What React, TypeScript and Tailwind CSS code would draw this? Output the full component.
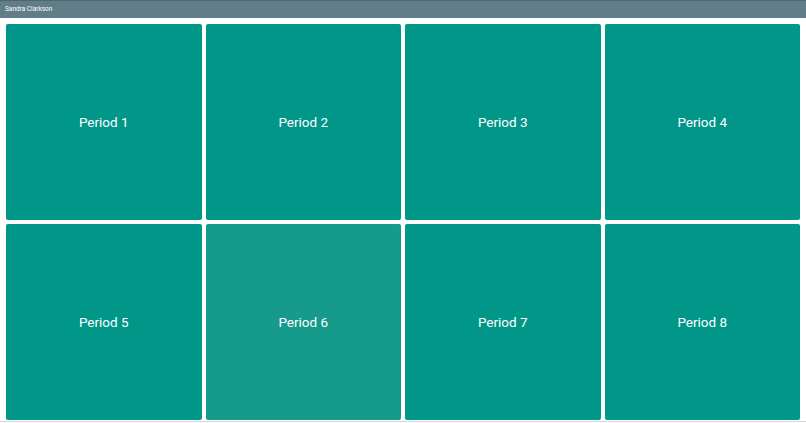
export default function App() {
  const periods = [1, 2, 3, 4, 5, 6, 7, 8];

  return (
    <div className="h-[423px] w-[806px] overflow-hidden bg-white font-['Roboto',sans-serif]">
      {/* top bar */}
      <div className="flex h-[18px] items-center border-t border-[#4f6570] bg-[#617d8a] px-[5px] text-[6.5px] text-white">
        Sandra Clarkson
      </div>

      <div className="grid grid-cols-4 gap-[4px] px-[6px] pt-[6px]">
        {periods.map((p) => (
          <div
            key={p}
            className={
              p === 6
                ? "flex h-[196px] items-center justify-center rounded-[2px] bg-[#159a8c] text-[13.5px] text-white"
                : "flex h-[196px] items-center justify-center rounded-[2px] bg-[#009688] text-[13.5px] text-white"
            }
          >
            Period {p}
          </div>
        ))}
      </div>
      <div className="mt-[1px] h-[1px] bg-[#d6d6d6]" />
    </div>
  );
}
